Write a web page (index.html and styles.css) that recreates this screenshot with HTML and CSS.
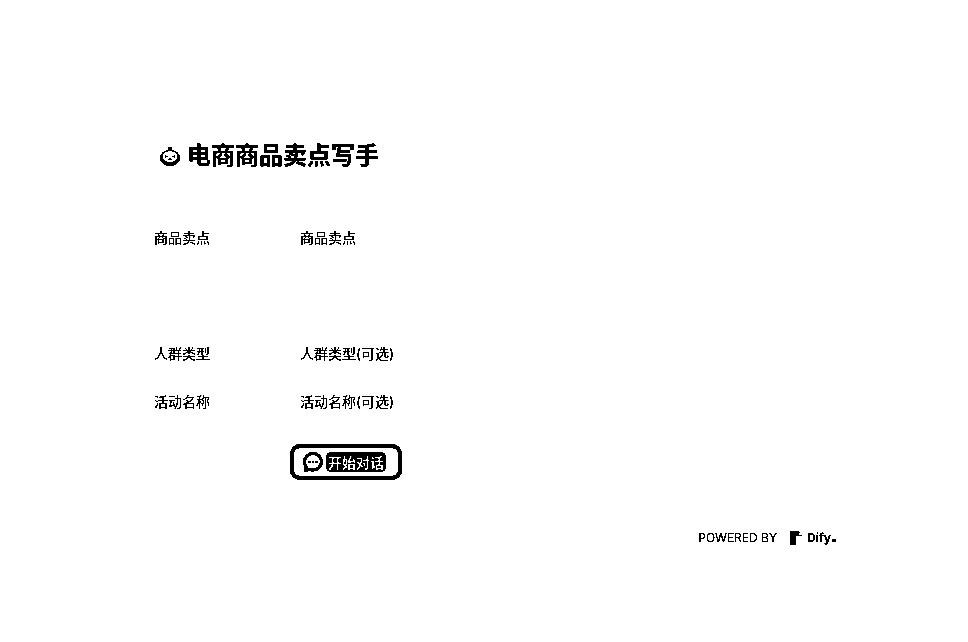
FILE: index.html
```html
<!DOCTYPE html>
<html lang="zh-CN">

<head>
  <meta charset="UTF-8">
  <meta name="viewport" content="width=device-width, initial-scale=1.0">
  <title>电商商品卖点写手</title>

  <link rel="stylesheet" href="styles.css">
</head>

<body>
  <main class="page">
    <header class="app-title">
      <svg class="app-icon" viewBox="0 0 20 20" width="20" height="20">
        <circle cx="10" cy="2.5" r="1.8" fill="#000" />
        <ellipse cx="10" cy="12" rx="10" ry="8" fill="#000" />
        <ellipse cx="10" cy="10.5" rx="7.5" ry="5.5" fill="#fff" />
        <path d="M5 9l3 1.5-3 1.5zM15 9l-3 1.5 3 1.5z" fill="#000" />
        <path d="M7.5 14l2.5-2.5 2.5 2.5z" fill="#000" />
      </svg>
      <h1>电商商品卖点写手</h1>
    </header>

    <form class="fields">
      <div class="field field-tall">
        <label class="field-label">商品卖点</label>
        <span class="field-hint">商品卖点</span>
      </div>
      <div class="field">
        <label class="field-label">人群类型</label>
        <span class="field-hint">人群类型(可选)</span>
      </div>
      <div class="field">
        <label class="field-label">活动名称</label>
        <span class="field-hint">活动名称(可选)</span>
      </div>
      <div class="actions">
        <button type="button" class="start-btn">
          <svg viewBox="0 0 20 20" width="20" height="20">
            <path d="M10 1.5C5.2 1.5 1.5 5.2 1.5 9.8c0 1.9.6 3.6 1.8 5L2.5 18.500l4-1.100c1.100.4 2.300.6 3.500.6 4.800 0 8.500-3.700 8.500-8.200S14.800 1.500 10 1.500z" fill="#fff" stroke="#000" stroke-width="3" />
            <circle cx="6.500" cy="10" r="1.300" fill="#000" />
            <circle cx="10" cy="10" r="1.300" fill="#000" />
            <circle cx="13.500" cy="10" r="1.300" fill="#000" />
          </svg>
          <span class="start-text">开始对话</span>
        </button>
      </div>
    </form>

    <footer class="powered">
      <span>POWERED BY</span>
      <span class="dify-logo">
        <svg viewBox="0 0 12 14" width="12" height="14">
          <path d="M0 0h8l4 3v2H6v9H0z" fill="#000" />
          <path d="M9 2h3v2H9z" fill="#fff" />
        </svg>
        <b class="dify-name">Dify<i class="dify-dot"></i></b>
      </span>
    </footer>
  </main>
</body>

</html>
```

FILE: styles.css
```css
html {
  background: #fff;
  filter: grayscale(1) brightness(0.72) contrast(60);
}

body {
  color: #000;
  font-family: "Inter", "Noto Sans CJK SC", sans-serif;
  margin: 0;
}

.page {
  box-sizing: border-box;
  height: 642px;
  padding: 142px 132px 0 154px;
}

.app-title {
  align-items: center;
  display: flex;
  gap: 7px;
  height: 28px;
  padding-left: 6px;
}

.app-title h1 {
  font-size: 24px;
  font-weight: 600;
  line-height: 28px;
  margin: 0;
}

.fields {
  display: flex;
  flex-direction: column;
  margin-top: 56px;
}

.field {
  box-sizing: border-box;
  display: flex;
  font-size: 14px;
  height: 48px;
  line-height: 20px;
  padding-top: 2px;
}

.field-tall {
  height: 116px;
}

.field-label {
  width: 146px;
}

.actions {
  margin-left: 136px;
  margin-top: 6px;
}

.start-btn {
  align-items: center;
  background: #fff;
  border: 4px solid #000;
  border-radius: 10px;
  display: flex;
  gap: 3px;
  height: 36px;
  padding: 0 9px;
  width: 112px;
}

.start-text {
  background: #000;
  border-radius: 5px;
  color: #fff;
  font-family: "Noto Sans CJK SC", sans-serif;
  font-size: 14px;
  font-weight: 700;
  line-height: 20px;
  padding: 0 2px;
}

.powered {
  align-items: center;
  display: flex;
  font-size: 12px;
  gap: 13px;
  justify-content: flex-end;
  margin-top: 50px;
}

.dify-logo {
  align-items: center;
  display: flex;
  gap: 5px;
}

.dify-name {
  font-size: 12px;
  font-weight: 700;
}

.dify-dot {
  background: #000;
  display: inline-block;
  height: 3px;
  margin-left: 1px;
  width: 4px;
}
```
